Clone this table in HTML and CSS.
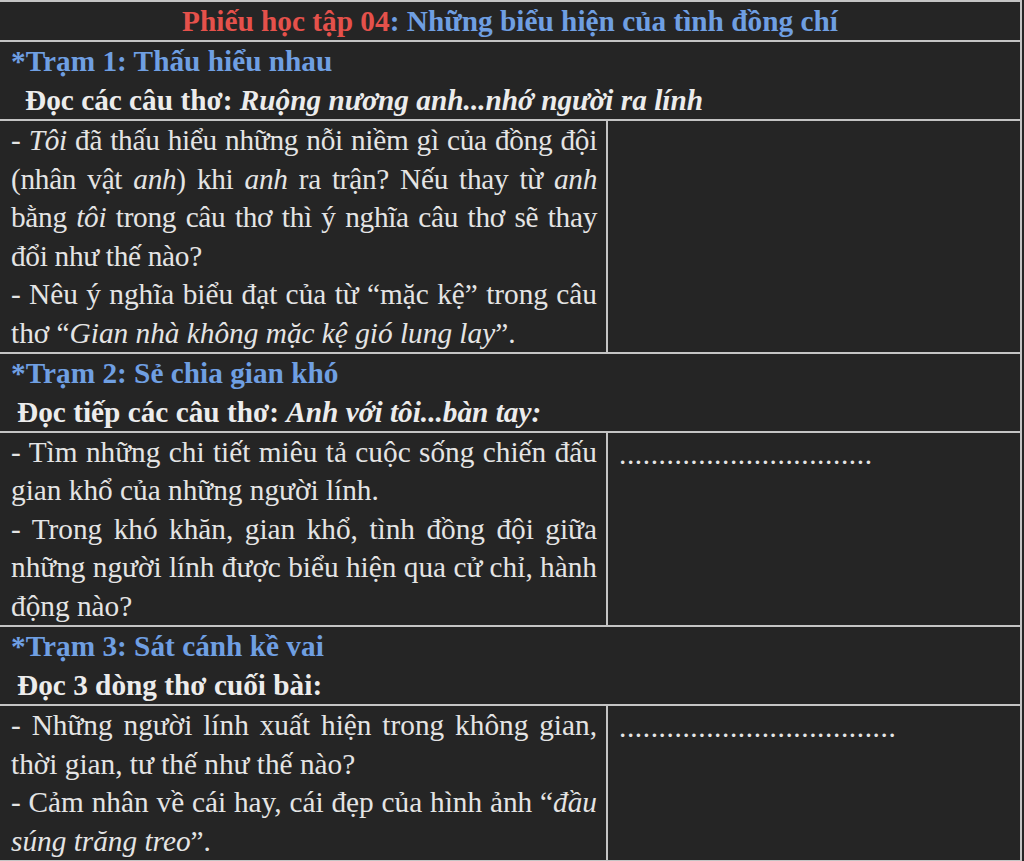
FILE: index.html
```html
<!DOCTYPE html>
<html lang="vi">
<head>
<meta charset="utf-8">
<title>Phiếu học tập 04</title>
<link rel="stylesheet" href="styles.css">
</head>
<body>
<table class="sheet">
  <colgroup><col class="col-left"><col class="col-right"></colgroup>
  <tr>
    <td colspan="2" class="title"><span class="red">Phiếu học tập 04</span>: Những biểu hiện của tình đồng chí</td>
  </tr>
  <tr>
    <td colspan="2" class="station">
      <div class="st-name">*Trạm 1: Thấu hiểu nhau</div>
      <div class="st-read ind1">Đọc các câu thơ: <i>Ruộng nương anh...nhớ người ra lính</i></div>
    </td>
  </tr>
  <tr>
    <td class="q"><span class="tight">- <i>Tôi</i> đã thấu hiểu những nỗi niềm gì của đồng đội (nhân vật <i>anh</i>) khi <i>anh</i> ra trận? Nếu thay từ <i>anh</i> bằng <i>tôi</i> trong câu thơ thì ý nghĩa câu thơ sẽ thay đổi như thế nào?</span><br>- Nêu ý nghĩa biểu đạt của từ “mặc kệ” trong câu thơ “<i>Gian nhà không mặc kệ gió lung lay</i>”.</td>
    <td class="a"></td>
  </tr>
  <tr>
    <td colspan="2" class="station">
      <div class="st-name">*Trạm 2: Sẻ chia gian khó</div>
      <div class="st-read ind2">Đọc tiếp các câu thơ: <i>Anh với tôi...bàn tay:</i></div>
    </td>
  </tr>
  <tr>
    <td class="q">- Tìm những chi tiết miêu tả cuộc sống chiến đấu gian khổ của những người lính.<br>- Trong khó khăn, gian khổ, tình đồng đội giữa những người lính được biểu hiện qua cử chỉ, hành động nào?</td>
    <td class="a"><span class="dots">................................</span></td>
  </tr>
  <tr>
    <td colspan="2" class="station">
      <div class="st-name">*Trạm 3: Sát cánh kề vai</div>
      <div class="st-read ind2">Đọc 3 dòng thơ cuối bài:</div>
    </td>
  </tr>
  <tr>
    <td class="q">- Những người lính xuất hiện trong không gian, thời gian, tư thế như thế nào?<br>- Cảm nhân về cái hay, cái đẹp của hình ảnh “<i>đầu súng trăng treo</i>”.</td>
    <td class="a"><span class="dots">...................................</span></td>
  </tr>
</table>
</body>
</html>
```

FILE: styles.css
```css
html, body {
  margin: 0;
  padding: 0;
  background: #252525;
}
body {
  font-family: "Liberation Serif", "Times New Roman", serif;
  font-size: 29.3px;
  color: #e4e4e4;
  width: 1024px;
  height: 861px;
  overflow: hidden;
}
.sheet {
  width: 1022px;
  border-collapse: collapse;
  table-layout: fixed;
}
.col-left { width: 607px; }
.sheet td {
  border: 2px solid #c4c4c4;
  padding: 0;
  vertical-align: top;
  line-height: 38.45px;
}
.sheet tr td:first-child { border-left: none; }
.title {
  text-align: center;
  font-weight: bold;
  color: #6f9fe2;
}
.red { color: #e5514b; }
.station {
  font-weight: bold;
  padding: 0 10px !important;
}
.st-name { color: #6f9fe2; padding-left: 1px; }
.st-read { color: #ececec; }
.ind1 { padding-left: 15px; }
.ind2 { padding-left: 7px; }
.q {
  text-align: justify;
  padding: 0 9px 0 11px !important;
}
.tight { letter-spacing: -0.3px; }
.a {
  padding: 0 11px !important;
}
.dots {
  letter-spacing: 0.6px;
  position: relative;
  top: 2px;
}
```
